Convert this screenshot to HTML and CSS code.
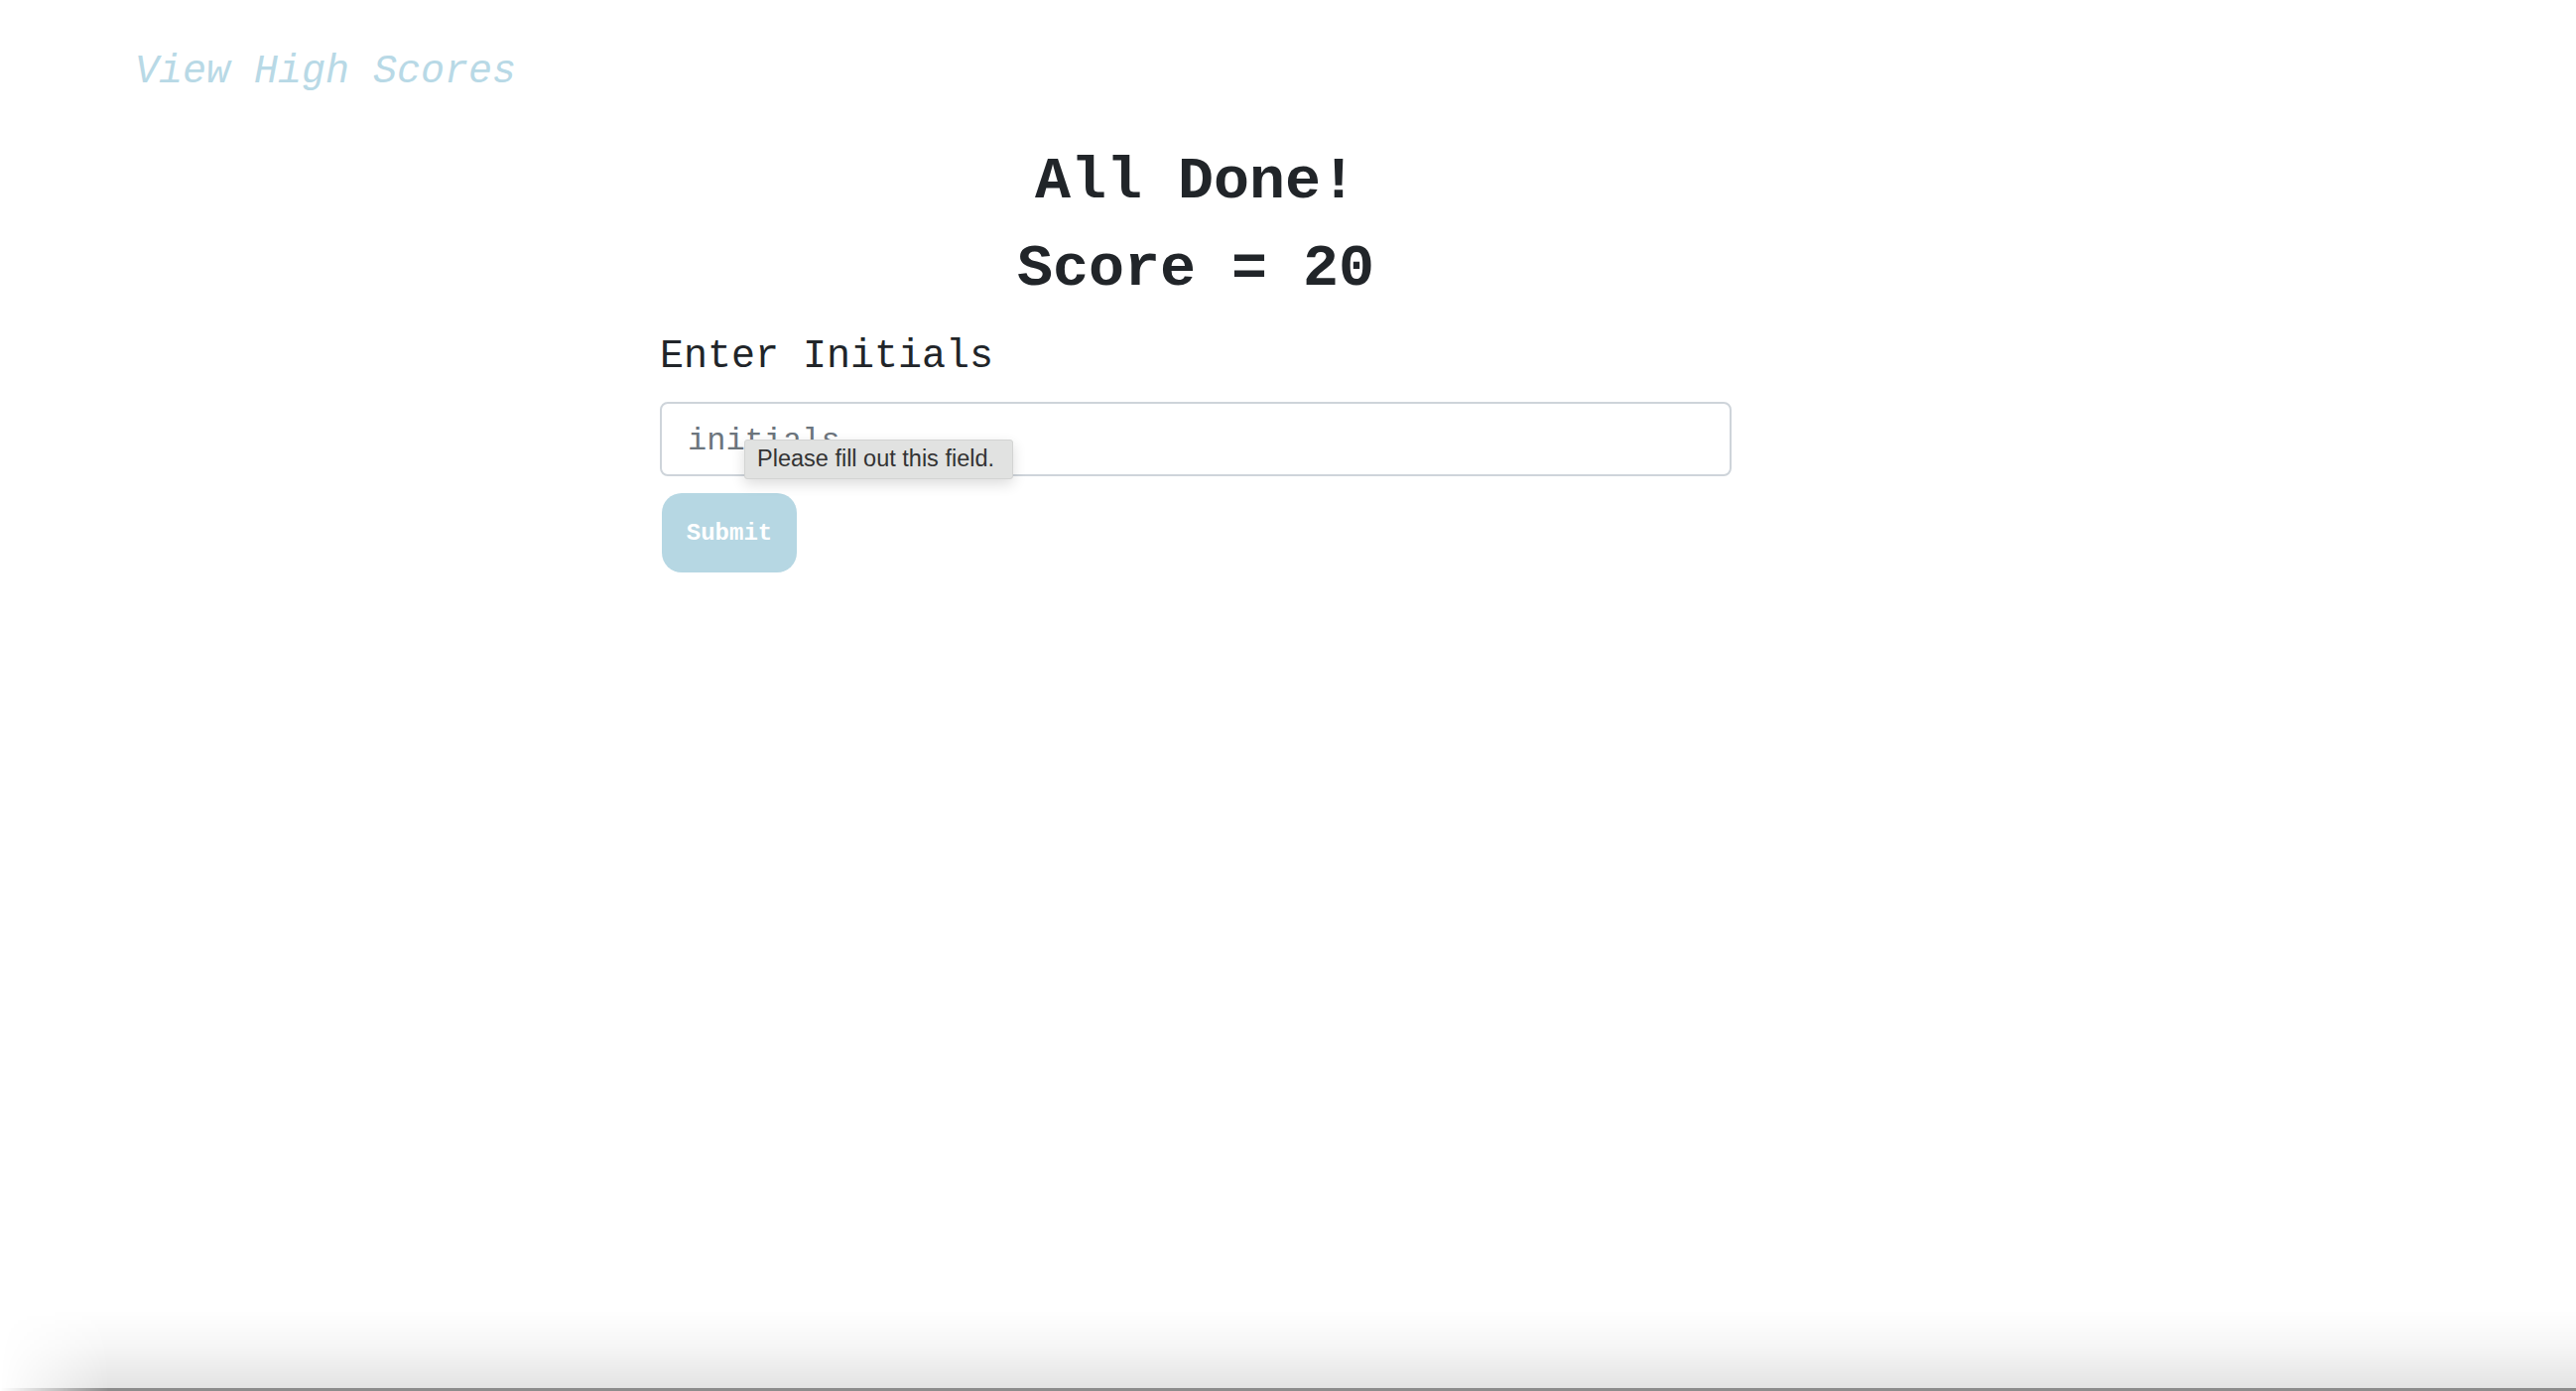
FILE: index.html
```html
<!DOCTYPE html>
<html lang="en">
<head>
<meta charset="utf-8">
<title>Quiz - All Done</title>
<link rel="stylesheet" href="styles.css">
</head>
<body>
  <header class="topbar">
    <a class="highscores" href="#">View High Scores</a>
  </header>
  <main class="panel">
    <h1 class="title">All Done!</h1>
    <h1 class="title score">Score = 20</h1>
    <form class="form">
      <label class="label" for="initials">Enter Initials</label>
      <input class="field" id="initials" type="text" placeholder="initials" required>
      <button class="submit" type="submit">Submit</button>
    </form>
  </main>
  <div class="tooltip">Please fill out this field.</div>
  <div class="dockshadow"></div>
</body>
</html>
```

FILE: styles.css
```css
html, body {
  margin: 0;
  padding: 0;
  background: #ffffff;
  height: 100%;
}

body {
  font-family: "Liberation Mono", "DejaVu Sans Mono", monospace;
  color: #212529;
  overflow: hidden;
}

.topbar {
  padding: 49px 0 0 136px;
  height: 48px;
}

.highscores {
  font-size: 40px;
  line-height: 48px;
  font-style: italic;
  color: #b8d9e6;
  text-decoration: none;
}

.panel {
  margin-left: 665px;
  width: 1080px;
  padding-top: 50px;
  display: flex;
  flex-direction: column;
}

.title {
  margin: 0;
  font-size: 60px;
  line-height: 72px;
  font-weight: bold;
  text-align: center;
}

.score {
  margin-top: 16px;
}

.form {
  display: flex;
  flex-direction: column;
  align-items: flex-start;
  margin-top: 29px;
}

.label {
  font-size: 40px;
  line-height: 48px;
  margin-left: 0;
}

.field {
  box-sizing: border-box;
  margin-top: 21px;
  width: 1080px;
  height: 75px;
  border: 2px solid #ced4da;
  border-radius: 8px;
  padding: 4px 26px 0;
  font-family: "Liberation Mono", "DejaVu Sans Mono", monospace;
  font-size: 32px;
  color: #495057;
  background: #fff;
  outline: none;
}

.field::placeholder {
  color: #6c757d;
  opacity: 1;
}

.submit {
  margin-top: 17px;
  margin-left: 2px;
  width: 136px;
  height: 80px;
  border: none;
  border-radius: 20px;
  background: #b6d7e3;
  color: #ffffff;
  font-family: "Liberation Mono", "DejaVu Sans Mono", monospace;
  font-weight: bold;
  font-size: 24px;
  padding: 0;
}

.tooltip {
  position: absolute;
  left: 750px;
  top: 443px;
  box-sizing: border-box;
  width: 271px;
  height: 40px;
  padding: 0 0 0 12px;
  background: #e1e2e1;
  border: 1px solid #d3d4d3;
  border-radius: 3px;
  box-shadow: 0 5px 14px rgba(0, 0, 0, 0.14);
  font-family: "Liberation Sans", Arial, sans-serif;
  font-size: 23.5px;
  line-height: 37px;
  color: #333333;
  white-space: nowrap;
}

.dockshadow {
  position: fixed;
  left: 0;
  right: 0;
  bottom: 0;
  height: 82px;
  background: linear-gradient(to bottom, rgba(0, 0, 0, 0) 0%, rgba(0, 0, 0, 0.035) 45%, rgba(0, 0, 0, 0.11) 96%, #8c8c8c 96.5%, #8c8c8c 100%);
  -webkit-mask-image: linear-gradient(to right, transparent 0, #000 110px);
  mask-image: linear-gradient(to right, transparent 0, #000 110px);
}
```
